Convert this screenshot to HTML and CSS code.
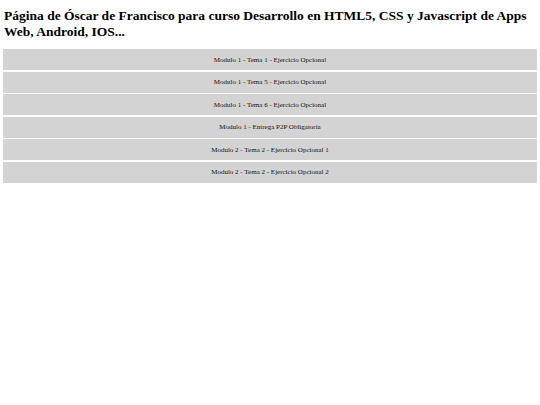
FILE: index.html
```html
<!DOCTYPE html>
<html lang="es">
<head>
<meta charset="utf-8">
<title>Óscar de Francisco</title>
<link rel="stylesheet" href="styles.css">
</head>
<body>
<h1 class="title">Página de Óscar de Francisco para curso Desarrollo en HTML5, CSS y Javascript de Apps Web, Android, IOS...</h1>
<ul class="list">
<li class="item">Modulo 1 - Tema 1 - Ejercicio Opcional</li>
<li class="item">Modulo 1 - Tema 5 - Ejercicio Opcional</li>
<li class="item">Modulo 1 - Tema 6 - Ejercicio Opcional</li>
<li class="item">Modulo 1 - Entrega P2P Obligatoria</li>
<li class="item">Modulo 2 - Tema 2 - Ejercicio Opcional 1</li>
<li class="item">Modulo 2 - Tema 2 - Ejercicio Opcional 2</li>
</ul>
</body>
</html>
```
FILE: styles.css
```css
html, body {
  margin: 0;
  background: #ffffff;
}
body {
  padding: 3px;
  font-family: "Liberation Serif", "Times New Roman", serif;
  color: #000;
}
.title {
  font-size: 13.5px;
  font-weight: bold;
  line-height: 16px;
  margin: 4.5px 0 9.5px 1px;
}
.list {
  list-style: none;
  margin: 0;
  padding: 0;
  display: flex;
  flex-direction: column;
  gap: 1.5px;
}
.item {
  background: #d3d3d3;
  height: 21px;
  display: flex;
  align-items: center;
  justify-content: center;
  font-size: 7px;
  color: #111;
}
```
